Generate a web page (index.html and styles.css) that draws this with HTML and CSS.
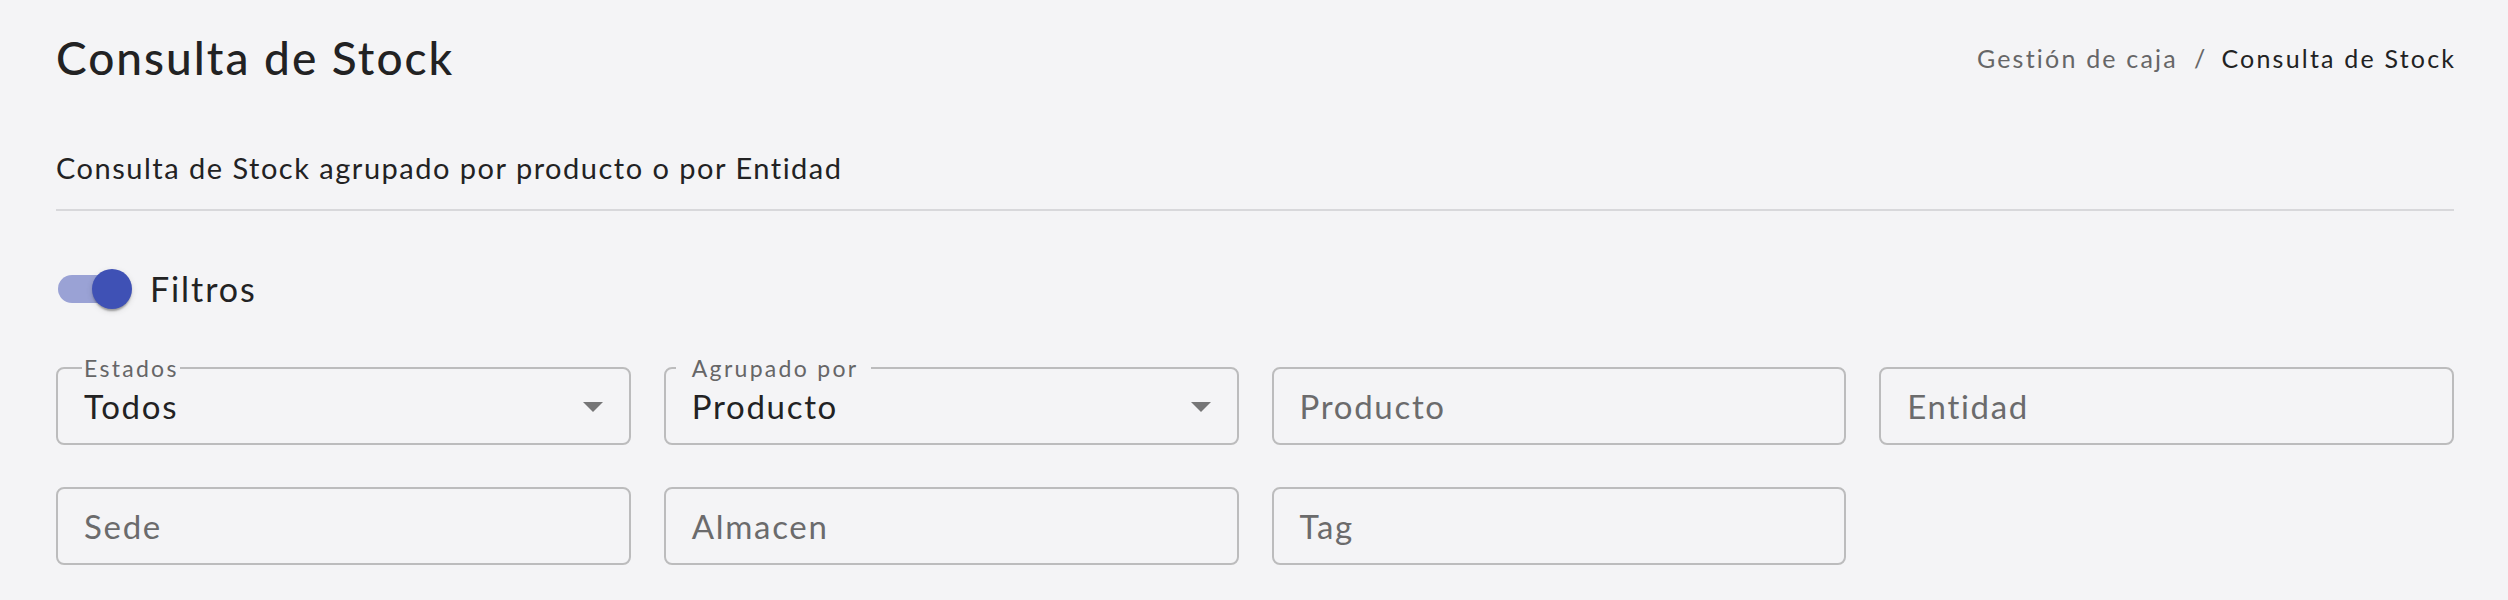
FILE: index.html
```html
<!DOCTYPE html>
<html lang="es">
<head>
<meta charset="utf-8">
<title>Consulta de Stock</title>
<link rel="stylesheet" href="styles.css">
</head>
<body>
<div class="page">
  <div class="header">
    <h1 class="title">Consulta de Stock</h1>
    <nav class="crumbs">
      <span class="crumb-link">Gestión de caja</span>
      <span class="crumb-sep">/</span>
      <span class="crumb-current">Consulta de Stock</span>
    </nav>
  </div>
  <p class="subtitle">Consulta de Stock agrupado por producto o por Entidad</p>
  <div class="divider"></div>
  <div class="filters-toggle">
    <div class="switch">
      <div class="switch-track"></div>
      <div class="switch-thumb"></div>
    </div>
    <span class="toggle-label">Filtros</span>
  </div>
  <div class="grid">
    <div class="field">
      <span class="field-label label-tight">Estados</span>
      <span class="value">Todos</span>
      <svg class="arrow" width="20" height="10" viewBox="0 0 20 10"><path d="M0 0L10 10L20 0Z"/></svg>
    </div>
    <div class="field">
      <span class="field-label label-wide">Agrupado por</span>
      <span class="value">Producto</span>
      <svg class="arrow" width="20" height="10" viewBox="0 0 20 10"><path d="M0 0L10 10L20 0Z"/></svg>
    </div>
    <div class="field"><span class="placeholder">Producto</span></div>
    <div class="field"><span class="placeholder">Entidad</span></div>
    <div class="field"><span class="placeholder">Sede</span></div>
    <div class="field"><span class="placeholder">Almacen</span></div>
    <div class="field"><span class="placeholder">Tag</span></div>
  </div>
</div>
</body>
</html>
```
FILE: styles.css
```css
* { box-sizing: border-box; }
html, body { margin: 0; }
body {
  background: #f4f4f6;
  font-family: Lato, "Noto Sans", sans-serif;
  color: #222223;
  width: 2508px;
  height: 600px;
  overflow: hidden;
}
.page { padding: 30px 54px 0 56px; }
.header {
  display: flex;
  justify-content: space-between;
  align-items: center;
  height: 56px;
}
.title {
  margin: 0;
  font-size: 46px;
  font-weight: 500;
  line-height: 56px;
  letter-spacing: 2px;
}
.crumbs {
  display: flex;
  align-items: center;
  font-size: 25px;
  line-height: 30px;
  letter-spacing: 2.2px;
}
.crumb-link { color: #666667; }
.crumb-sep { color: #666667; margin: 0 14px 0 16px; }
.crumb-current { color: #222223; margin-right: -2.2px; }
.subtitle {
  margin: 65px 0 0;
  font-size: 29px;
  line-height: 34px;
  letter-spacing: 1.5px;
}
.divider {
  height: 2px;
  background: #d8d8db;
  margin-top: 24px;
}
.filters-toggle {
  display: flex;
  align-items: center;
  height: 76px;
  margin-top: 40px;
}
.switch {
  position: relative;
  width: 116px;
  height: 76px;
  margin-left: -22px;
  display: flex;
  align-items: center;
  justify-content: center;
}
.switch-track {
  width: 68px;
  height: 28px;
  border-radius: 14px;
  background: #9aa2d5;
}
.switch-thumb {
  position: absolute;
  left: 58px;
  top: 18px;
  width: 40px;
  height: 40px;
  border-radius: 50%;
  background: #3f51b5;
  box-shadow: 0 4px 2px -2px rgba(0,0,0,0.2), 0 2px 2px 0 rgba(0,0,0,0.14), 0 2px 6px 0 rgba(0,0,0,0.12);
}
.toggle-label {
  font-size: 34px;
  line-height: 40px;
  letter-spacing: 1.9px;
}
.grid {
  display: grid;
  grid-template-columns: repeat(4, 1fr);
  column-gap: 33px;
  row-gap: 42px;
  margin-top: 40px;
}
.field {
  position: relative;
  height: 78px;
  border: 2px solid #bcbcbd;
  border-radius: 8px;
  display: flex;
  align-items: center;
  padding: 0 26px;
  font-size: 33px;
  line-height: 40px;
}
.field-label {
  position: absolute;
  top: -13px;
  font-size: 23px;
  line-height: 24px;
  color: #666667;
  background: #f4f4f6;
  letter-spacing: 2.3px;
}
.label-tight { left: 24px; padding: 0 1px 0 2px; }
.label-wide { left: 10px; padding: 0 12px 0 16px; }
.value { flex: 1; color: #222223; letter-spacing: 1.7px; }
.placeholder { color: #6b6b6c; letter-spacing: 1.7px; }
.arrow { fill: #767677; flex: none; margin-top: 2px; }
```
